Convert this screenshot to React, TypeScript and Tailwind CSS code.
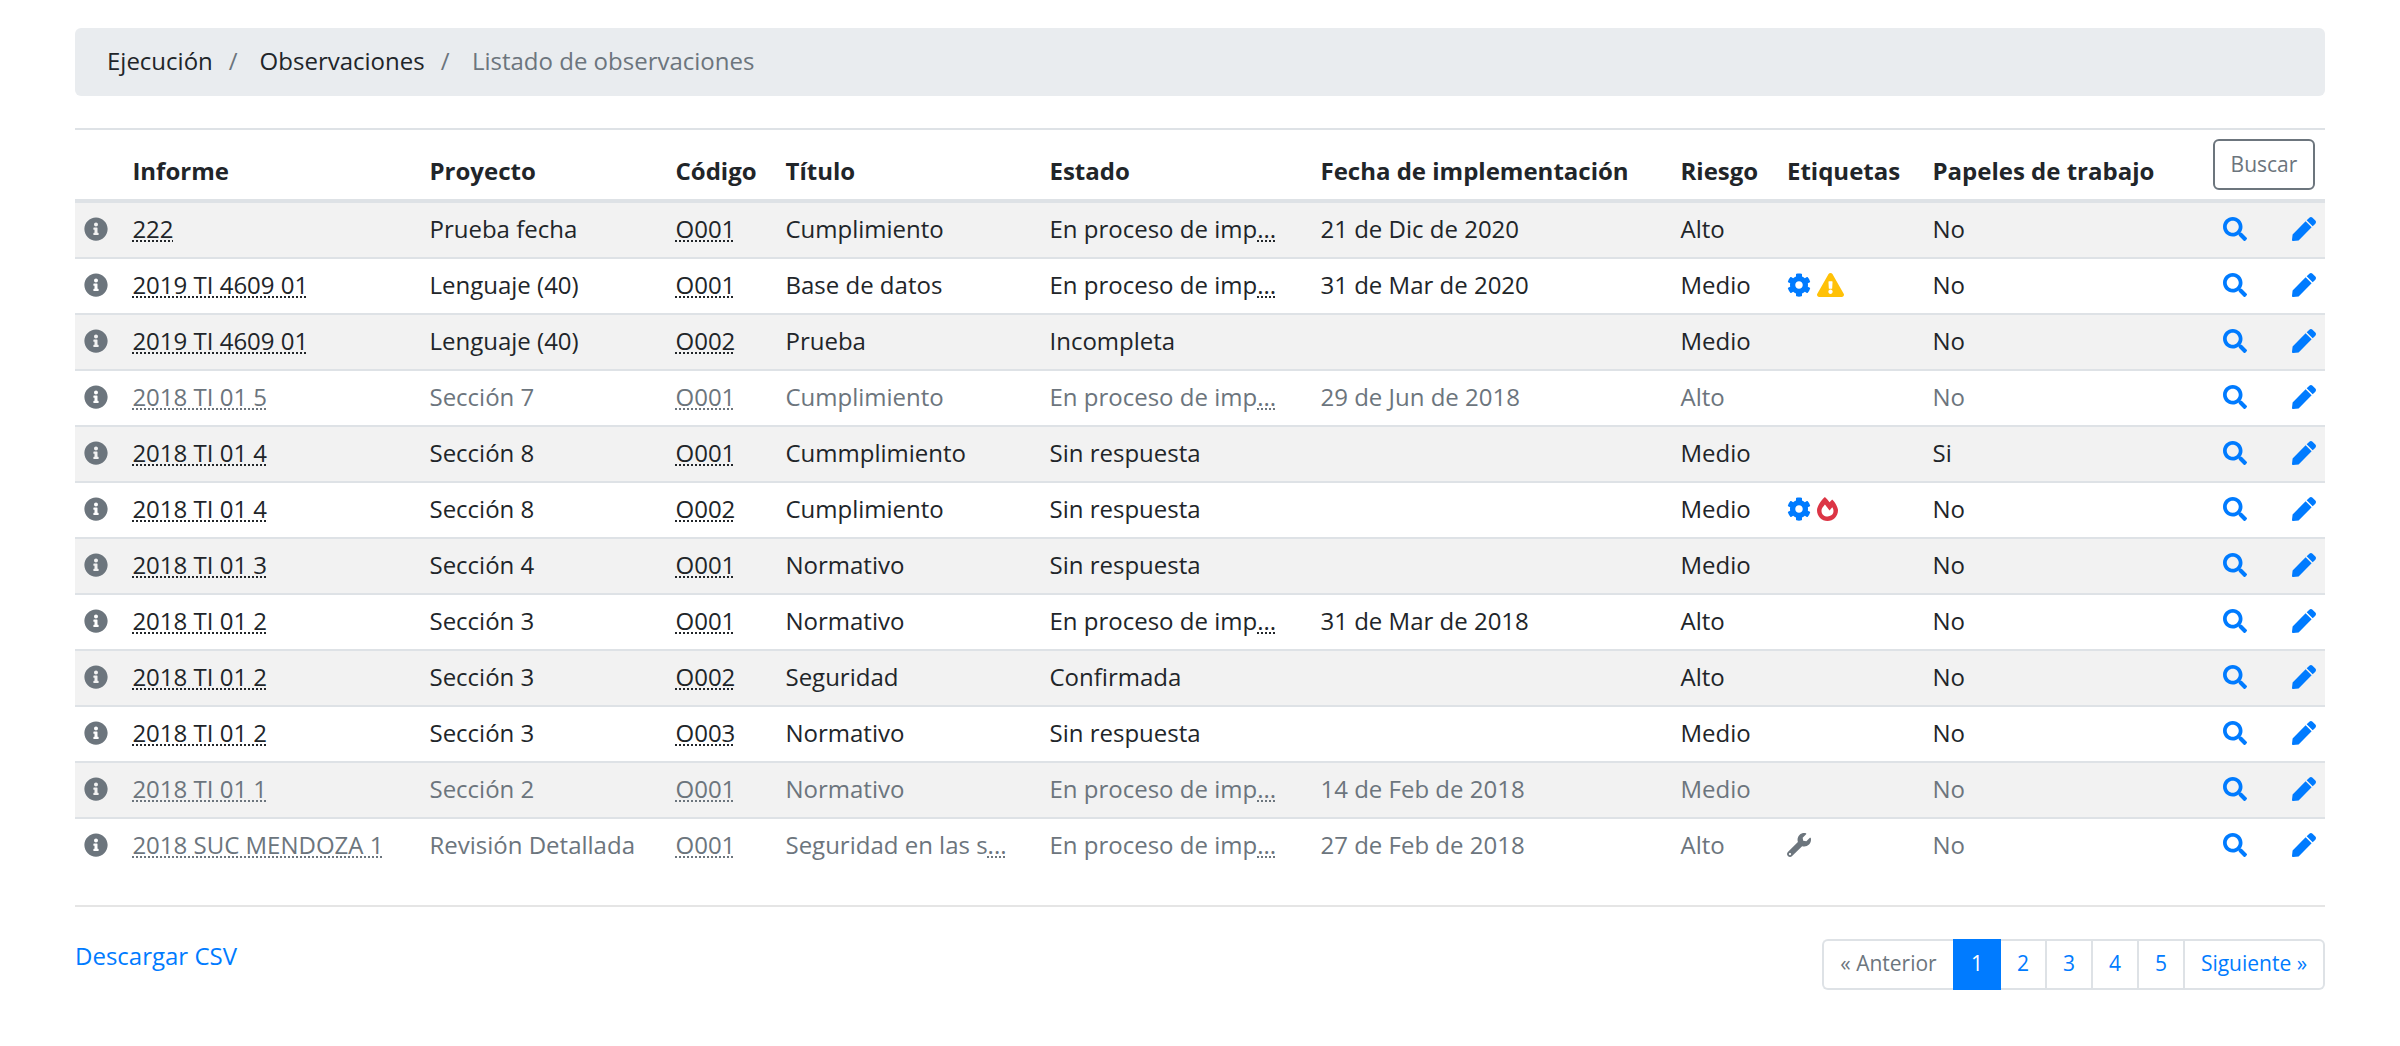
import React from "react";
import {
  FaInfoCircle,
  FaSearch,
  FaPen,
  FaCog,
  FaExclamationTriangle,
  FaFireAlt,
  FaWrench,
} from "react-icons/fa";

type Tag = "cog" | "warning" | "fire" | "wrench";

interface Observation {
  report: string;
  project: string;
  code: string;
  title: string;
  status: string;
  date?: string;
  risk: string;
  tags?: Tag[];
  papers?: string;
  muted?: boolean;
}

const IN_PROGRESS = "En proceso de imp...";

const rows: Observation[] = [
  { report: "222", project: "Prueba fecha", code: "O001", title: "Cumplimiento", status: IN_PROGRESS, date: "21 de Dic de 2020", risk: "Alto" },
  { report: "2019 TI 4609 01", project: "Lenguaje (40)", code: "O001", title: "Base de datos", status: IN_PROGRESS, date: "31 de Mar de 2020", risk: "Medio", tags: ["cog", "warning"] },
  { report: "2019 TI 4609 01", project: "Lenguaje (40)", code: "O002", title: "Prueba", status: "Incompleta", risk: "Medio" },
  { report: "2018 TI 01 5", project: "Sección 7", code: "O001", title: "Cumplimiento", status: IN_PROGRESS, date: "29 de Jun de 2018", risk: "Alto", muted: true },
  { report: "2018 TI 01 4", project: "Sección 8", code: "O001", title: "Cummplimiento", status: "Sin respuesta", risk: "Medio", papers: "Si" },
  { report: "2018 TI 01 4", project: "Sección 8", code: "O002", title: "Cumplimiento", status: "Sin respuesta", risk: "Medio", tags: ["cog", "fire"] },
  { report: "2018 TI 01 3", project: "Sección 4", code: "O001", title: "Normativo", status: "Sin respuesta", risk: "Medio" },
  { report: "2018 TI 01 2", project: "Sección 3", code: "O001", title: "Normativo", status: IN_PROGRESS, date: "31 de Mar de 2018", risk: "Alto" },
  { report: "2018 TI 01 2", project: "Sección 3", code: "O002", title: "Seguridad", status: "Confirmada", risk: "Alto" },
  { report: "2018 TI 01 2", project: "Sección 3", code: "O003", title: "Normativo", status: "Sin respuesta", risk: "Medio" },
  { report: "2018 TI 01 1", project: "Sección 2", code: "O001", title: "Normativo", status: IN_PROGRESS, date: "14 de Feb de 2018", risk: "Medio", muted: true },
  { report: "2018 SUC MENDOZA 1", project: "Revisión Detallada", code: "O001", title: "Seguridad en las s...", status: IN_PROGRESS, date: "27 de Feb de 2018", risk: "Alto", tags: ["wrench"], muted: true },
];

const GRID =
  "grid grid-cols-[57.4px_297.1px_246px_110px_264px_271px_360px_106.5px_145.5px_280px_1fr]";

function Abbr({ children }: { children: React.ReactNode }) {
  return (
    <span className="underline decoration-dotted decoration-2 underline-offset-2 [text-decoration-skip-ink:none]">
      {children}
    </span>
  );
}

function Truncated({ text }: { text: string }) {
  if (!text.endsWith("...")) return <>{text}</>;
  return (
    <>
      {text.slice(0, -3)}
      <Abbr>...</Abbr>
    </>
  );
}

function TagIcon({ tag }: { tag: Tag }) {
  switch (tag) {
    case "cog":
      return <FaCog className="size-6 text-[#007bff]" />;
    case "warning":
      return <FaExclamationTriangle className="h-6 w-[27px] text-[#ffc107]" />;
    case "fire":
      return <FaFireAlt className="h-6 w-[21px] text-[#dc3545]" />;
    case "wrench":
      return <FaWrench className="size-6 text-[#6c757d]" />;
  }
}

function Row({ item }: { item: Observation }) {
  return (
    <div
      className={`${GRID} h-14 items-center border-t-2 border-[#dee2e6] pr-[9px] pb-0.5 odd:bg-[#f2f2f2] first:h-[54px] first:border-t-0 ${
        item.muted ? "text-[#6c757d]" : "text-[#212529]"
      }`}
    >
      <div className="pl-[9px]">
        <FaInfoCircle className="size-6 text-[#6c757d]" />
      </div>
      <div><Abbr>{item.report}</Abbr></div>
      <div>{item.project}</div>
      <div><Abbr>{item.code}</Abbr></div>
      <div><Truncated text={item.title} /></div>
      <div><Truncated text={item.status} /></div>
      <div>{item.date}</div>
      <div>{item.risk}</div>
      <div className="flex gap-[6px]">
        {item.tags?.map((t) => <TagIcon key={t} tag={t} />)}
      </div>
      <div>{item.papers ?? "No"}</div>
      <div className="flex justify-between pl-[10.5px] text-[#007bff]">
        <FaSearch className="size-6" />
        <FaPen className="size-6" />
      </div>
    </div>
  );
}

export default function App() {
  return (
    <div className="min-h-[1046px] bg-white px-[75px] pt-7 font-['Open_Sans',sans-serif] text-[24px] leading-9 text-[#212529]">
      <nav className="flex h-[68px] items-center rounded-md bg-[#e9ecef] px-8 pb-0.5">
        <span>Ejecución</span>
        <span className="pl-4 pr-[22px] text-[#6c757d]">/</span>
        <span>Observaciones</span>
        <span className="pl-4 pr-[22.5px] text-[#6c757d]">/</span>
        <span className="text-[#6c757d]">Listado de observaciones</span>
      </nav>

      <div className="mt-8">
        <div className={`${GRID} h-[75px] items-end border-t-2 border-b-4 border-[#dee2e6] pr-[10px] font-bold`}>
          <div />
          <div className="pb-2.5">Informe</div>
          <div className="pb-2.5">Proyecto</div>
          <div className="pb-2.5">Código</div>
          <div className="pb-2.5">Título</div>
          <div className="pb-2.5">Estado</div>
          <div className="pb-2.5">Fecha de implementación</div>
          <div className="pb-2.5">Riesgo</div>
          <div className="pb-2.5">Etiquetas</div>
          <div className="pb-2.5">Papeles de trabajo</div>
          <div className="flex justify-end pb-[9px]">
            <button className="flex h-[51px] w-[102px] items-center justify-center rounded-md border-2 border-[#6c757d] pb-[2px] text-[21px] font-normal text-[#6c757d]">
              Buscar
            </button>
          </div>
        </div>
        <div>
          {rows.map((r, i) => <Row key={i} item={r} />)}
        </div>
      </div>

      <hr className="mt-8 border-t-2 border-[#e5e5e5]" />

      <div className="mt-8 flex items-start justify-between">
        <a className="-mt-px text-[#007bff]">Descargar CSV</a>
        <div className="flex h-[51px] text-[21px] leading-[45px] text-[#007bff]">
          <span className="w-[131px] rounded-l-md border-2 border-[#dee2e6] border-r-0 text-center text-[#6c757d]">« Anterior</span>
          <span className="w-12 border-2 border-[#007bff] bg-[#007bff] text-center text-white">1</span>
          <span className="w-[46px] border-y-2 border-r-2 border-[#dee2e6] text-center">2</span>
          <span className="w-[46px] border-y-2 border-r-2 border-[#dee2e6] text-center">3</span>
          <span className="w-[46px] border-y-2 border-r-2 border-[#dee2e6] text-center">4</span>
          <span className="w-[46px] border-y-2 border-r-2 border-[#dee2e6] text-center">5</span>
          <span className="w-[140px] rounded-r-md border-y-2 border-r-2 border-[#dee2e6] text-center">Siguiente »</span>
        </div>
      </div>
    </div>
  );
}
